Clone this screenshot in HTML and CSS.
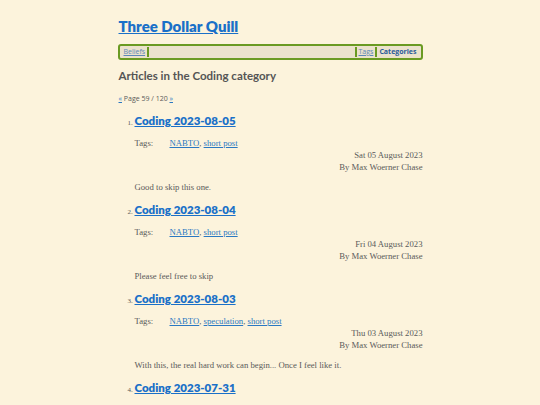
FILE: index.html
```html
<!DOCTYPE html>
<html lang="en">
<head>
    <meta charset="UTF-8">
    <meta name="viewport" content="width=device-width, initial-scale=1.0">
    <title>Articles in the Coding category - Three Dollar Quill</title>
    <link rel="stylesheet" href="styles.css">
</head>
<body>
    <div class="page">
        <header>
            <h1 class="site-title"><a href="#">Three Dollar Quill</a></h1>
            <nav class="menu">
                <a href="#">Beliefs</a>
                <span class="spacer"></span>
                <a href="#">Tags</a>
                <a href="#" class="active">Categories</a>
            </nav>
        </header>

        <main>
            <h2 class="listing-title">Articles in the Coding category</h2>
            <p class="pager"><a href="#">«</a> Page 59 / 120 <a href="#">»</a></p>

            <ol class="articles">
                <li>
                    <h3><a href="#">Coding 2023-08-05</a></h3>
                    <div class="tags"><span class="label">Tags:</span><span><a href="#">NABTO</a>, <a href="#">short post</a></span></div>
                    <div class="byline">
                        <div>Sat 05 August 2023</div>
                        <div>By Max Woerner Chase</div>
                    </div>
                    <p class="summary">Good to skip this one.</p>
                </li>
                <li>
                    <h3><a href="#">Coding 2023-08-04</a></h3>
                    <div class="tags"><span class="label">Tags:</span><span><a href="#">NABTO</a>, <a href="#">short post</a></span></div>
                    <div class="byline">
                        <div>Fri 04 August 2023</div>
                        <div>By Max Woerner Chase</div>
                    </div>
                    <p class="summary">Please feel free to skip</p>
                </li>
                <li>
                    <h3><a href="#">Coding 2023-08-03</a></h3>
                    <div class="tags"><span class="label">Tags:</span><span><a href="#">NABTO</a>, <a href="#">speculation</a>, <a href="#">short post</a></span></div>
                    <div class="byline">
                        <div>Thu 03 August 2023</div>
                        <div>By Max Woerner Chase</div>
                    </div>
                    <p class="summary">With this, the real hard work can begin... Once I feel like it.</p>
                </li>
                <li>
                    <h3><a href="#">Coding 2023-07-31</a></h3>
                    <div class="tags"><span class="label">Tags:</span><span><a href="#">NABTO</a>, <a href="#">short post</a></span></div>
                    <div class="byline">
                        <div>Mon 31 July 2023</div>
                        <div>By Max Woerner Chase</div>
                    </div>
                    <p class="summary">Nothing much today.</p>
                </li>
            </ol>
        </main>
    </div>
</body>
</html>
```

FILE: styles.css
```css
body {
    margin: 0;
    background-color: #fcf3dc;
    color: #5a5a5a;
    font-family: "Liberation Serif", serif;
    font-size: 8.7px;
    line-height: 12px;
}

a {
    color: #2a78c2;
}

.page {
    width: 305px;
    margin: 0 auto;
    padding-top: 16px;
}

.site-title {
    margin: 0 0 8px 1px;
    font-family: Lato, sans-serif;
    font-size: 15px;
    font-weight: 800;
    line-height: 20px;
}

.site-title a {
    color: #1a70c8;
}

.menu {
    display: flex;
    align-items: center;
    height: 12px;
    padding: 0 2px;
    background-color: #ebe2cc;
    border: 2px solid #6a9a22;
    border-radius: 3px;
    font-family: "Open Sans", sans-serif;
    font-size: 7px;
}

.menu a {
    padding: 0 2px;
    border-right: 2px solid #6a9a22;
    color: #5b87b8;
    line-height: 10px;
}

.menu a:last-child {
    border-right: none;
}

.menu .spacer {
    flex: 1;
}

.menu a:nth-child(3) {
    border-left: 2px solid #6a9a22;
}

.menu .active {
    font-weight: bold;
    text-decoration: none;
    color: #2a5a9a;
}

.listing-title {
    margin: 9px 0 0 1px;
    font-family: Lato, sans-serif;
    font-size: 11.5px;
    font-weight: bold;
    color: #555;
    line-height: 14px;
}

.pager {
    margin: 11px 0 0 1px;
    font-family: "Open Sans", sans-serif;
    font-size: 7px;
    line-height: 10px;
}

.articles {
    margin: 9px 0 0;
    padding-left: 17px;
    font-size: 7px;
}

.articles li {
    margin-bottom: 9px;
}

.articles h3 {
    margin: 0;
    font-family: Lato, sans-serif;
    font-size: 11.5px;
    font-weight: 800;
    line-height: 16px;
}

.articles h3 a {
    color: #1a70c8;
}

.tags {
    display: flex;
    margin-top: 8px;
    font-size: 8.7px;
}

.tags .label {
    width: 35px;
}

.byline {
    text-align: right;
    font-size: 8.7px;
}

.summary {
    margin: 8px 0 0;
    font-size: 8.7px;
}
```
